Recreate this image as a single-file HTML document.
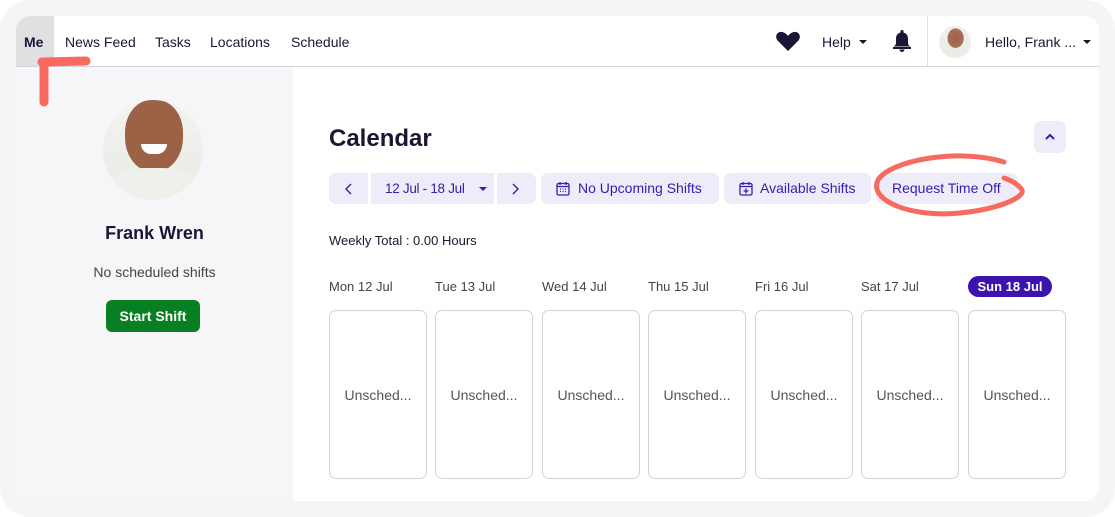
<!DOCTYPE html>
<html><head><meta charset="utf-8"><style>
*{box-sizing:border-box;margin:0;padding:0}
body{width:1115px;height:517px;background:#fff;font-family:"Liberation Sans",sans-serif;position:relative;overflow:hidden;color:#1c1533}
.frame{position:absolute;left:0;top:0;width:1115px;height:517px;background:#f5f5f8;border-radius:30px}
.card{position:absolute;left:16px;top:16px;width:1083px;height:485px;background:#fff;border-radius:14px;overflow:hidden}
.nav{position:absolute;left:0;top:0;width:1083px;height:51px;border-bottom:1px solid #d6d3de;background:#fff}
.nav span{position:absolute;top:18px;font-size:14px;color:#1c1533}
.me{position:absolute;left:0;top:0;width:38px;height:50px;background:#e0e0e3}
.side{position:absolute;left:0;top:51px;width:277px;height:434px;background:#f6f6f9}
.a{position:absolute;color:#1c1533}
.btn{position:absolute;top:157px;height:31px;background:#efecf9;border-radius:7px;color:#3a1ab0;font-size:14px;line-height:31px;white-space:nowrap}
.day{position:absolute;top:263px;font-size:13px;color:#444}
.box{position:absolute;top:294px;width:98px;height:169px;border:1px solid #d3d2d8;border-radius:7px;font-size:14px;color:#555;text-align:center;line-height:169px}
</style></head><body>
<div class="frame"></div>
<div class="card">
 <div class="nav">
  <div class="me"></div>
  <span style="left:8px;font-weight:bold">Me</span>
  <span style="left:49px">News Feed</span>
  <span style="left:139px">Tasks</span>
  <span style="left:194px">Locations</span>
  <span style="left:275px">Schedule</span>
  <svg style="position:absolute;left:759px;top:15px" width="26" height="21" viewBox="0 0 26 21"><path d="M13 20 L3 10 C-1 6 2 0 7 1 C10 1.5 12 3.5 13 5 C14 3.5 16 1.5 19 1 C24 0 27 6 23 10 Z" fill="#1c1533"/></svg>
  <span style="left:806px">Help</span>
  <svg style="position:absolute;left:843px;top:24px" width="8" height="5"><path d="M0 0H8L4 4Z" fill="#1c1533"/></svg>
  <svg style="position:absolute;left:876px;top:13px" width="20" height="24" viewBox="0 0 20 24"><path d="M10 1a1.5 1.5 0 0 1 1.5 1.5v1C15 4.5 16 7 16 10v5l2 2.5H2L4 15v-5c0-3 1-5.5 4.5-6.5v-1A1.5 1.5 0 0 1 10 1z" fill="#1c1533"/><rect x="1" y="18" width="18" height="2" fill="#1c1533"/><path d="M7.5 20.5h5a2.5 2.5 0 0 1-5 0z" fill="#1c1533"/></svg>
  <div style="position:absolute;left:911px;top:0;width:1px;height:50px;background:#dedde3"></div>
  <div style="position:absolute;left:923px;top:10px;width:32px;height:32px;border-radius:50%;background:radial-gradient(ellipse 35% 42% at 52% 38%,#9a6248 0,#a87055 70%,transparent 75%),linear-gradient(#f0efed,#e9ebe7)"></div>
  <span style="left:969px">Hello, Frank ...</span>
  <svg style="position:absolute;left:1067px;top:24px" width="8" height="5"><path d="M0 0H8L4 4Z" fill="#1c1533"/></svg>
 </div>
 <div class="side">
  <div style="position:absolute;left:87px;top:33px;width:100px;height:100px;border-radius:50%;overflow:hidden;background:linear-gradient(#f3f3f1,#e8ebe6)">
   <div style="position:absolute;left:22px;top:0;width:58px;height:72px;border-radius:45% 45% 48% 48%;background:#9c6246"></div>
   <div style="position:absolute;left:38px;top:44px;width:26px;height:10px;border-radius:0 0 12px 12px;background:#fff"></div>
   <div style="position:absolute;left:5px;top:68px;width:90px;height:40px;border-radius:40% 40% 0 0;background:#eef0ec"></div>
  </div>
  <div class="a" style="left:0;width:277px;top:156px;text-align:center;font-size:18px;font-weight:bold">Frank Wren</div>
  <div class="a" style="left:0;width:277px;top:197px;text-align:center;font-size:14px;color:#444">No scheduled shifts</div>
  <div style="position:absolute;left:90px;top:233px;width:94px;height:32px;background:#087f23;border-radius:6px;color:#fff;font-weight:bold;font-size:14px;text-align:center;line-height:32px">Start Shift</div>
 </div>
 <div class="a" style="left:313px;top:109px;font-size:24px;font-weight:bold">Calendar</div>
 <div style="position:absolute;left:1018px;top:105px;width:32px;height:32px;background:#efecf9;border-radius:7px"><svg style="position:absolute;left:11px;top:12px" width="10" height="7"><path d="M1 6L5 2L9 6" stroke="#3a1ab0" stroke-width="2" fill="none"/></svg></div>
 <div class="btn" style="left:313px;width:39px;border-radius:7px 0 0 7px"><svg style="position:absolute;left:15px;top:10px" width="8" height="12"><path d="M7 1L2 6L7 11" stroke="#3a1ab0" stroke-width="1.4" fill="none"/></svg></div>
 <div class="btn" style="left:355px;width:123px;border-radius:0;padding-left:14px;font-size:13.5px;letter-spacing:-0.3px">12 Jul - 18 Jul<svg style="position:absolute;left:108px;top:14px" width="8" height="5"><path d="M0 0H8L4 4Z" fill="#3a1ab0"/></svg></div>
 <div class="btn" style="left:481px;width:39px;border-radius:0 7px 7px 0"><svg style="position:absolute;left:15px;top:10px" width="8" height="12"><path d="M1 1L6 6L1 11" stroke="#3a1ab0" stroke-width="1.4" fill="none"/></svg></div>
 <div class="btn" style="left:525px;width:178px;padding-left:37px"><svg style="position:absolute;left:15px;top:8px" width="14" height="15" viewBox="0 0 14 15"><rect x="1" y="2.5" width="12" height="11.5" rx="1.5" stroke="#3a1ab0" fill="none" stroke-width="1.3"/><path d="M1 5.5H13M4 1v3M10 1v3" stroke="#3a1ab0" stroke-width="1.3"/><path d="M4 8h1M6.5 8h1M9 8h1M4 10.5h1M6.5 10.5h1M9 10.5h1" stroke="#3a1ab0" stroke-width="1.3"/></svg>No Upcoming Shifts</div>
 <div class="btn" style="left:708px;width:147px;padding-left:36px"><svg style="position:absolute;left:15px;top:8px" width="14" height="15" viewBox="0 0 14 15"><rect x="1" y="2.5" width="12" height="11.5" rx="1.5" stroke="#3a1ab0" fill="none" stroke-width="1.3"/><path d="M1 5.5H13M4 1v3M10 1v3M7 7.5v5M4.5 10h5" stroke="#3a1ab0" stroke-width="1.3"/></svg>Available Shifts</div>
 <div class="btn" style="left:860px;width:142px;padding-left:16px">Request Time Off</div>
 <div class="a" style="left:313px;top:217px;font-size:13px">Weekly Total : 0.00 Hours</div>
 <div class="day" style="left:313px">Mon 12 Jul</div>
 <div class="day" style="left:419px">Tue 13 Jul</div>
 <div class="day" style="left:526px">Wed 14 Jul</div>
 <div class="day" style="left:632px">Thu 15 Jul</div>
 <div class="day" style="left:739px">Fri 16 Jul</div>
 <div class="day" style="left:845px">Sat 17 Jul</div>
 <div class="day" style="left:952px;top:260px;width:84px;height:21px;background:#3a14ad;border-radius:11px;color:#fff;font-weight:bold;text-align:center;line-height:21px">Sun 18 Jul</div>
 <div class="box" style="left:313px">Unsched...</div>
 <div class="box" style="left:419px">Unsched...</div>
 <div class="box" style="left:526px">Unsched...</div>
 <div class="box" style="left:632px">Unsched...</div>
 <div class="box" style="left:739px">Unsched...</div>
 <div class="box" style="left:845px">Unsched...</div>
 <div class="box" style="left:952px">Unsched...</div>
</div>
<svg style="position:absolute;left:0;top:0" width="1115" height="517">
 <path d="M42 62 L86 61 M44 64 L44 102" stroke="#f76a60" stroke-width="9" stroke-linecap="round" fill="none"/>
 <path d="M1004 162 C960 148 890 160 878 180 C868 200 910 218 960 213 C1000 209 1025 197 1022 190 C1018 184 1010 180 1004 178" stroke="#f76a60" stroke-width="5" stroke-linecap="round" fill="none"/>
</svg>
</body></html>
